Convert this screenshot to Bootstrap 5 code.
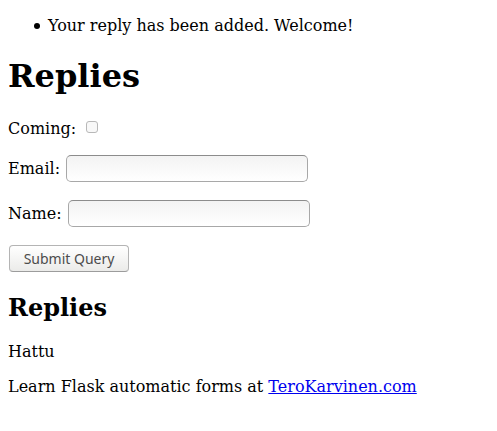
<!DOCTYPE html>
<html lang="en">
<head>
<meta charset="utf-8">
<meta name="viewport" content="width=device-width, initial-scale=1">
<title>Replies</title>
<link href="https://cdn.jsdelivr.net/npm/bootstrap@5.3.0/dist/css/bootstrap.min.css" rel="stylesheet">
<style>
body { font-family: "DejaVu Serif", serif; font-size: 16px; line-height: 19px; color: #000; background: #fff; }
.flashes { padding-left: 26px; margin-bottom: 22px; }
.flashes li::before { content: ""; width: 6px; height: 6px; margin-right: 8px; border-radius: 50%; background: #000; }
h1 { font-size: 32px; line-height: 38px; font-weight: 700; margin-bottom: 24px; }
h2 { font-size: 24px; line-height: 28px; font-weight: 700; margin-bottom: 20px; }
.reply-form { margin-bottom: 22px; }
.coming-row { margin-bottom: 17px; }
.text-row { gap: 6px; margin-bottom: 18px; }
.form-check-input.coming-box { width: 12px; height: 12px; margin: 0 0 3px 10px; border: 1px solid #b8b8b8; border-radius: 3px; background-color: #f8f8f8; }
.form-control.reply-input { width: 242px; height: 27px; padding: 2px 6px; border: 1px solid #a8a8a8; border-top-color: #8c8c8c; border-radius: 5px; background: linear-gradient(#f3f3f3, #fff); font: 15px "Noto Sans", sans-serif; }
.btn.submit-btn { width: 120px; height: 27px; margin-left: 1px; padding: 0; border: 1px solid #b4b4b4; border-bottom-color: #9c9c9c; border-radius: 4px; background: linear-gradient(#fff, #ebebe9); color: #4c4c4c; font: 14px/25px "Noto Sans", sans-serif; }
.reply { margin-bottom: 16px; }
.site-link { color: #00e; }
</style>
</head>
<body class="p-2">
<main class="pt-2">
<ul class="flashes list-unstyled"><li class="d-flex align-items-center">Your reply has been added. Welcome!</li></ul>
<h1>Replies</h1>
<form class="reply-form">
<div class="coming-row d-flex align-items-center"><label for="coming">Coming:</label><input class="form-check-input coming-box" type="checkbox" id="coming"></div>
<div class="text-row d-flex align-items-center"><label for="email">Email:</label><input class="form-control reply-input" type="text" id="email"></div>
<div class="text-row d-flex align-items-center"><label for="name">Name:</label><input class="form-control reply-input" type="text" id="name"></div>
<button class="btn submit-btn" type="submit">Submit Query</button>
</form>
<h2>Replies</h2>
<p class="reply">Hattu</p>
<p class="mb-0">Learn Flask automatic forms at <a class="site-link" href="#">TeroKarvinen.com</a></p>
</main>
<script src="https://cdn.jsdelivr.net/npm/bootstrap@5.3.0/dist/js/bootstrap.bundle.min.js"></script>
</body>
</html>
